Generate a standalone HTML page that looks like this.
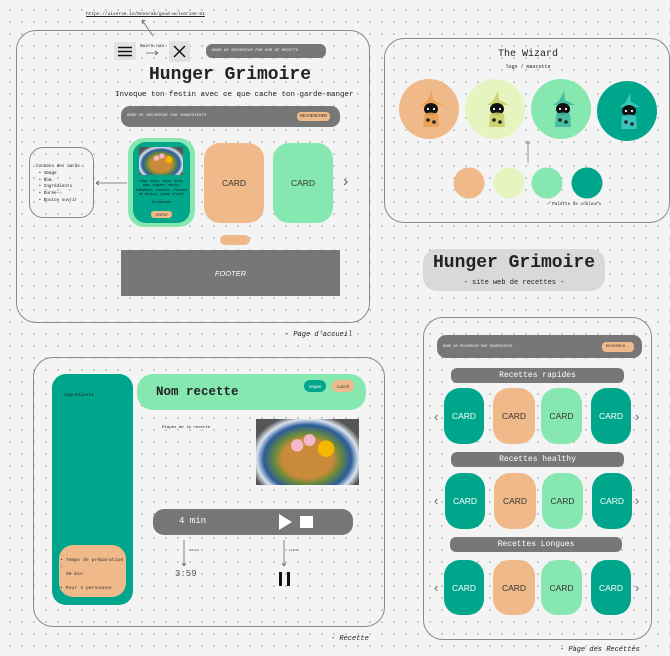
<!DOCTYPE html>
<html><head><meta charset="utf-8"><style>
*{margin:0;padding:0;box-sizing:border-box}
body{width:670px;height:656px;overflow:hidden;background:#f4f4f4;background-image:radial-gradient(circle,#b5b5b5 0.7px,transparent 1.1px);background-size:12px 12px;background-position:4px 4px;font-family:"Liberation Mono",monospace;color:#222;position:relative}
.a{position:absolute}
.fr{position:absolute;border:1.2px solid #8a8a8a;border-radius:20px}
.c{display:flex;align-items:center;justify-content:center}
.gray{background:#777}
.t{font-family:"Liberation Sans",sans-serif}
.card{position:absolute;border-radius:16px;display:flex;align-items:center;justify-content:center;font-family:"Liberation Sans",sans-serif;font-size:8.5px}
.tl{background:#00a68c;color:#fff}.or{background:#f0b98a;color:#333}.lg{background:#86e8b0;color:#333}
.food{background:radial-gradient(circle at 68% 45%,#f6b600 0 10%,transparent 11%),radial-gradient(circle at 40% 40%,#f4b8c8 0 8%,transparent 9%),radial-gradient(circle at 52% 32%,#f4b8c8 0 8%,transparent 9%),radial-gradient(ellipse at 50% 60%,#c98a3a 0 35%,#6b8b3a 45%,#2a5c9a 60%,#dbe4ef 70%,#555 80%)}
.hd{position:absolute;height:15px;border-radius:6px;background:#777;color:#fff;font-size:8px;display:flex;align-items:center;justify-content:center}
.chev{position:absolute;color:#666;font-family:"Liberation Sans",sans-serif;font-size:13px}
</style></head><body>

<!-- Frame 1 -->
<div class="a" style="left:86px;top:12px;font-size:4.5px;text-decoration:underline">https://uiverse.io/Devorab/good-wolverine-51</div>
<svg class="a" style="left:0;top:0" width="670" height="656">
<g stroke="#666" stroke-width="0.8" fill="none">
<path d="M153 36 L142 20 M142 20 l1 4 M142 20 l4 1"/>
<path d="M146 53 H158 M158 53 l-3 -2 M158 53 l-3 2"/>
<path d="M127 183 H96 M96 183 l3 -2 M96 183 l3 2"/>
<path d="M528 163 V141 M528 141 l-2 3 M528 141 l2 3" stroke="#999" stroke-width="1"/>
<path d="M184 540 V566 M184 566 l-2 -3 M184 566 l2 -3"/>
<path d="M284 540 V566 M284 566 l-2 -3 M284 566 l2 -3"/>
</g></svg>
<div class="fr" style="left:16px;top:30px;width:354px;height:293px"></div>
<div class="a c" style="left:114px;top:42px;width:22px;height:18px;background:#e2e2e2"><svg width="14" height="11"><path d="M0 1.5H14M0 5.5H14M0 9.5H14" stroke="#111" stroke-width="1.4"/></svg></div>
<div class="a" style="left:140px;top:44px;font-size:4.5px">Ouvre nav</div>
<div class="a c" style="left:169px;top:41px;width:21px;height:21px;background:#e2e2e2"><svg width="13" height="13"><path d="M1 1L12 12M12 1L1 12" stroke="#111" stroke-width="1.5"/></svg></div>
<div class="a gray" style="left:206px;top:44px;width:120px;height:14px;border-radius:6px;color:#eee;font-size:4px;font-style:italic;padding:5px 6px">BARE DE RECHERCHE PAR NOM DE RECETTE</div>
<div class="a" style="left:0;width:460px;top:65px;text-align:center;font-size:18px;font-weight:bold">Hunger Grimoire</div>
<div class="a" style="left:115px;top:91px;font-size:7.5px">Invoque ton festin avec ce que cache ton garde-manger</div>
<div class="a gray" style="left:121px;top:106px;width:219px;height:21px;border-radius:9px"></div>
<div class="a" style="left:127px;top:114px;color:#eee;font-size:4px;font-style:italic">BARE DE RECHERCHE PAR INGREDIENTS</div>
<div class="a or c" style="left:297px;top:112px;width:33px;height:9px;border-radius:4px;font-size:4.5px">RECHERCHER</div>

<div class="a" style="left:29px;top:147px;width:65px;height:71px;border:1px solid #888;border-radius:14px;font-size:4.3px;padding:16px 0 0 6px;line-height:6.8px">Contenu des cards :<br>&nbsp;• Image<br>&nbsp;• Nom<br>&nbsp;• Ingrédients<br>&nbsp;• Durée-<span style="color:#6ab">◷</span><br>&nbsp;• Bouton ouvrir</div>

<div class="a" style="left:128px;top:138px;width:67px;height:89px;background:#86e8b0;border-radius:16px"></div>
<div class="a tl" style="left:133px;top:142px;width:57px;height:81px;border-radius:13px"></div>
<div class="a food" style="left:139px;top:147px;width:44px;height:28px"></div>
<div class="a" style="left:134px;top:179px;width:55px;text-align:center;font-size:3.3px;line-height:4.3px;color:#111">soba, miso, soja, bols, aha, algues, oeufs, kamaboko, ciboule, flocons de bonite, jaune d'oeuf<br><br>15 minutes</div>
<div class="a or c" style="left:151px;top:211px;width:21px;height:7px;border-radius:3px;font-size:3.3px">OUVRIR</div>
<div class="card or" style="left:204px;top:143px;width:60px;height:80px">CARD</div>
<div class="card lg" style="left:273px;top:143px;width:60px;height:80px">CARD</div>
<div class="chev" style="left:343px;top:173px;font-size:16px">›</div>
<div class="a or" style="left:220px;top:235px;width:30px;height:10px;border-radius:5px"></div>
<div class="a gray c" style="left:121px;top:250px;width:219px;height:46px;color:#fff;font-size:7.5px;font-style:italic;font-family:'Liberation Sans',sans-serif">FOOTER</div>
<div class="a" style="left:285px;top:331px;font-size:7px;font-style:italic">- Page d'accueil</div>

<!-- Frame 2 -->
<div class="fr" style="left:384px;top:38px;width:286px;height:185px"></div>
<div class="a" style="left:468px;top:49px;width:120px;text-align:center;font-size:10px">The Wizard</div>
<div class="a" style="left:468px;top:64px;width:120px;text-align:center;font-size:5px">logo / mascotte</div>
<svg class="a" style="left:0;top:0" width="670" height="656">
<defs><g id="w"><path d="M-10 -8 L12 -8 L2 -13 L1 -22 L-4 -12 Z" fill-opacity=".9"/><ellipse cx="0" cy="-4" rx="7" ry="6" fill="#111"/><circle cx="-3" cy="-4" r="1.1" fill="#fff"/><circle cx="3" cy="-4" r="1.1" fill="#fff"/><path d="M-7 1 Q0 -2 7 1 L8 14 L-8 14 Z" fill-opacity=".9"/><circle cx="-3" cy="7" r="1.8" fill="#222"/><circle cx="3" cy="9" r="1.8" fill="#222"/></g></defs>
<circle cx="429" cy="109" r="30" fill="#f0b98a"/><use href="#w" x="431" y="113" fill="#e8a050"/>
<circle cx="495" cy="109" r="30" fill="#e6f5c0"/><use href="#w" x="497" y="113" fill="#c8cf6a"/>
<circle cx="561" cy="109" r="30" fill="#86e8b0"/><use href="#w" x="563" y="113" fill="#3fb8a0"/>
<circle cx="627" cy="111" r="30" fill="#00a68c"/><use href="#w" x="629" y="115" fill="#3cc8c0"/>
<circle cx="469" cy="183" r="15.5" fill="#f0b98a"/><circle cx="509" cy="183" r="15.5" fill="#e6f5c0"/><circle cx="547" cy="183" r="15.5" fill="#86e8b0"/><circle cx="587" cy="183" r="15.5" fill="#00a68c"/>
</svg>
<div class="a" style="left:547px;top:202px;font-size:4.3px">— Palette de couleurs</div>

<div class="a" style="left:423px;top:249px;width:182px;height:42px;background:#d9d9d9;border-radius:14px"></div>
<div class="a" style="left:423px;top:253px;width:182px;text-align:center;font-size:18px;font-weight:bold">Hunger Grimoire</div>
<div class="a" style="left:423px;top:279px;width:182px;text-align:center;font-size:7px">- site web de recettes -</div>

<!-- Frame 3 -->
<div class="fr" style="left:33px;top:357px;width:352px;height:270px"></div>
<div class="a tl" style="left:52px;top:374px;width:81px;height:231px;border-radius:14px"></div>
<div class="a" style="left:64px;top:393px;font-size:4.5px;font-style:italic">Ingrédients</div>
<div class="a or" style="left:59px;top:545px;width:67px;height:52px;border-radius:14px;font-size:4.8px;padding:12px 0 0 1px;line-height:7px">• Temps de préparation :<br>&nbsp;&nbsp;30 min<br><br>• Pour 4 personnes</div>
<div class="a lg" style="left:137px;top:374px;width:229px;height:36px;border-radius:16px"></div>
<div class="a" style="left:156px;top:385px;font-size:12.5px;font-weight:bold">Nom recette</div>
<div class="a tl c t" style="left:304px;top:380px;width:22px;height:12px;border-radius:6px;font-size:4.5px">Vegan</div>
<div class="a or c t" style="left:332px;top:380px;width:22px;height:12px;border-radius:6px;font-size:4.5px">Lunch</div>
<div class="a" style="left:162px;top:426px;font-size:4px;font-style:italic">Étapes de la recette</div>
<div class="a food" style="left:256px;top:419px;width:103px;height:66px"></div>
<div class="a gray" style="left:153px;top:509px;width:200px;height:26px;border-radius:11px"></div>
<div class="a" style="left:179px;top:516px;font-size:9px;color:#fff">4 min</div>
<svg class="a" style="left:278px;top:513px" width="40" height="18"><path d="M1 1 L14 9 L1 17 Z" fill="#fff"/><rect x="22" y="3" width="13" height="12" fill="#fff"/></svg>
<div class="a" style="left:190px;top:549px;font-size:3px">click</div>
<div class="a" style="left:289px;top:549px;font-size:3px">click</div>
<div class="a" style="left:175px;top:569px;font-size:9px;color:#555">3:59</div>
<div class="a" style="left:279px;top:572px;width:3px;height:14px;background:#111"></div>
<div class="a" style="left:287px;top:572px;width:3px;height:14px;background:#111"></div>
<div class="a" style="left:331px;top:635px;font-size:7px;font-style:italic">- Recette</div>

<!-- Frame 4 -->
<div class="fr" style="left:423px;top:317px;width:229px;height:323px"></div>
<div class="a gray" style="left:437px;top:335px;width:205px;height:23px;border-radius:9px"></div>
<div class="a" style="left:443px;top:345px;color:#eee;font-size:3.5px;font-style:italic">BARE DE RECHERCHE PAR INGREDIENTS</div>
<div class="a or c" style="left:602px;top:342px;width:32px;height:10px;border-radius:4px;font-size:4px">RECHERCH..</div>

<div class="hd" style="left:451px;top:368px;width:173px">Recettes rapides</div>
<div class="card tl" style="left:444px;top:388px;width:40px;height:56px">CARD</div>
<div class="card or" style="left:493px;top:388px;width:42px;height:56px">CARD</div>
<div class="card lg" style="left:541px;top:388px;width:41px;height:56px">CARD</div>
<div class="card tl" style="left:591px;top:388px;width:40px;height:56px">CARD</div>
<div class="chev" style="left:434px;top:409px">‹</div><div class="chev" style="left:635px;top:409px">›</div>

<div class="hd" style="left:451px;top:452px;width:173px">Recettes healthy</div>
<div class="card tl" style="left:445px;top:473px;width:40px;height:56px">CARD</div>
<div class="card or" style="left:494px;top:473px;width:42px;height:56px">CARD</div>
<div class="card lg" style="left:542px;top:473px;width:41px;height:56px">CARD</div>
<div class="card tl" style="left:592px;top:473px;width:40px;height:56px">CARD</div>
<div class="chev" style="left:434px;top:493px">‹</div><div class="chev" style="left:635px;top:493px">›</div>

<div class="hd" style="left:450px;top:537px;width:172px">Recettes Longues</div>
<div class="card tl" style="left:444px;top:560px;width:40px;height:55px">CARD</div>
<div class="card or" style="left:493px;top:560px;width:42px;height:55px">CARD</div>
<div class="card lg" style="left:541px;top:560px;width:41px;height:55px">CARD</div>
<div class="card tl" style="left:591px;top:560px;width:40px;height:55px">CARD</div>
<div class="chev" style="left:434px;top:580px">‹</div><div class="chev" style="left:635px;top:580px">›</div>
<div class="a" style="left:560px;top:646px;font-size:7px;font-style:italic">- Page des Recettes</div>
</body></html>
